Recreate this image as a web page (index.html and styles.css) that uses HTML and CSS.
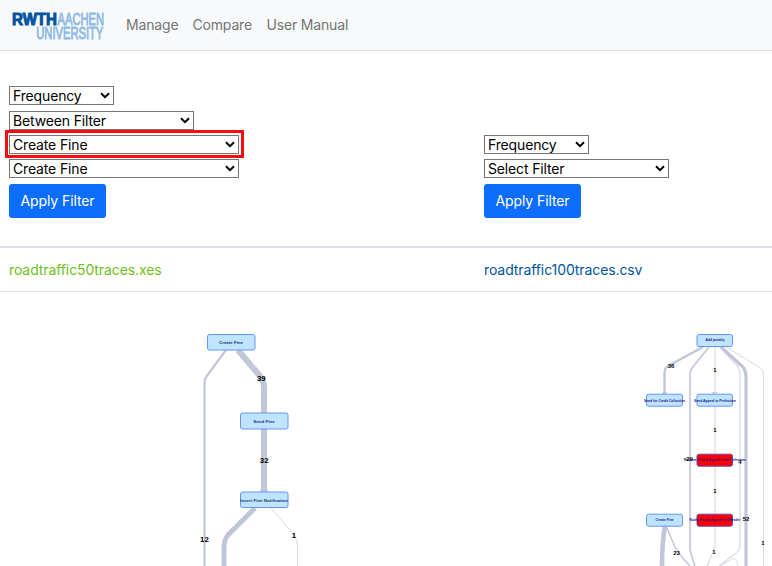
FILE: index.html
```
<!DOCTYPE html>
<html lang="en">
<head>
<meta charset="utf-8">
<title>Compare</title>
<link rel="stylesheet" href="styles.css">
</head>
<body>
<nav class="navbar">
  <svg class="logo" width="92" height="34" viewBox="0 -3 92 34" aria-label="RWTH Aachen University">
    <text class="logo-dark" x="0" y="12.6" textLength="45" lengthAdjust="spacingAndGlyphs">RWTH</text>
    <text class="logo-light" x="45.5" y="12.7" textLength="46.5" lengthAdjust="spacingAndGlyphs">AACHEN</text>
    <text class="logo-light" x="24.3" y="26.8" textLength="67" lengthAdjust="spacingAndGlyphs">UNIVERSITY</text>
  </svg>
  <a class="nav-link manage">Manage</a>
  <a class="nav-link compare">Compare</a>
  <a class="nav-link manual">User Manual</a>
</nav>
<main class="comparison">
  <section class="filters">
    <form class="filter-form">
      <div class="picker small first"><select><option>Frequency</option></select><svg class="chevron" viewBox="0 0 10 7"><path d="M1 1.3 5 5.2 9 1.3"/></svg></div>
      <div class="picker medium"><select><option>Between Filter</option></select><svg class="chevron" viewBox="0 0 10 7"><path d="M1 1.3 5 5.2 9 1.3"/></svg></div>
      <div class="picker large marked"><select><option>Create Fine</option></select><svg class="chevron" viewBox="0 0 10 7"><path d="M1 1.3 5 5.2 9 1.3"/></svg></div>
      <div class="picker large"><select><option>Create Fine</option></select><svg class="chevron" viewBox="0 0 10 7"><path d="M1 1.3 5 5.2 9 1.3"/></svg></div>
      <button class="apply" type="button">Apply Filter</button>
    </form>
    <form class="filter-form">
      <div class="picker small"><select><option>Frequency</option></select><svg class="chevron" viewBox="0 0 10 7"><path d="M1 1.3 5 5.2 9 1.3"/></svg></div>
      <div class="picker medium"><select><option>Select Filter</option></select><svg class="chevron" viewBox="0 0 10 7"><path d="M1 1.3 5 5.2 9 1.3"/></svg></div>
      <button class="apply" type="button">Apply Filter</button>
    </form>
  </section>
  <section class="files">
    <span class="file green"><span>roadtraffic50traces.xes</span></span>
    <span class="file blue"><span>roadtraffic100traces.csv</span></span>
  </section>
  <svg class="graphs" width="772" height="274" viewBox="0 292 772 274">
    <g class="edges">
      <path stroke-width="2.2" d="M226 350 206 377Q204.500 380 204.500 384V566"/>
      <path stroke-width="6" d="M238 350 260 376Q264 381 264 388V492"/>
      <path stroke-width="5" d="M255 508 228 535Q224 540 224 547V566"/>
      <path class="thin" stroke-width="1" d="M271 508 294 535Q297.500 540 297.500 546V566"/>
    </g>
    <g class="arrowheads">
      <path d="M261 413v-3h6v3zM260.500 492v-3h7v3zM662.500 394v-2h4v2zM712.500 394v-2h5l-2.500 2z"/>
    </g>
    <g class="nodes">
      <rect x="207.500" y="334.500" width="47.500" height="15.500" rx="2"/>
      <rect x="240.500" y="413" width="47.500" height="16" rx="2"/>
      <rect x="240.500" y="492" width="47.500" height="15.500" rx="2"/>
    </g>
    <g class="node-text left">
      <text x="231" y="344" textLength="24" lengthAdjust="spacingAndGlyphs">Create Fine</text>
      <text x="264" y="422.500" textLength="21.500" lengthAdjust="spacingAndGlyphs">Send Fine</text>
      <text x="264.200" y="501.700" textLength="48" lengthAdjust="spacingAndGlyphs">Insert Fine Notification</text>
    </g>
    <g class="count left">
      <text x="261.300" y="381">39</text><text x="264.200" y="462.700">32</text>
      <text x="204.400" y="542">12</text><text x="294" y="538">1</text>
    </g>

    <g class="edges">
      <path stroke-width="2.400" d="M703 347 668 366Q664.500 368 664.500 373V393"/>
      <path stroke-width="1.600" d="M709 347 692 368Q690 371 690 375V548Q690 552 695 566"/>
      <path class="thin" stroke-width="1.200" d="M715 347V393M715 407V453M715 467V513M715 527V547L707 566"/>
      <path class="thin" stroke-width="1.300" d="M720 347 738 367Q740 370 740 374V546Q740 550 736 553L719 566"/>
      <path stroke-width="3.200" d="M721 347 743 367Q746 371 746 377V566"/>
      <path class="thin" stroke-width="1" d="M726 347 759 367Q763.500 370 763.500 374V566"/>
      <path stroke-width="4.600" d="M665 526Q662 542 662 566"/>
      <path stroke-width="1.400" d="M666 526 675 547Q677 552 690 566"/>
      <path class="thin" stroke-width="1" d="M720 566 730 560Q737 555 738 566"/>
      <path class="thin" stroke-width=".7" d="m713 451 2 2 2-2m-4 60 2 2 2-2"/>
    </g>
    <g class="nodes">
      <rect x="697" y="334.500" width="35.500" height="12" rx="2"/>
      <rect x="646.500" y="394.200" width="36" height="12" rx="2"/>
      <rect x="697" y="394.200" width="35.500" height="12" rx="2"/>
      <rect x="646.500" y="514.200" width="36" height="12" rx="2"/>
      <rect class="alert" x="697" y="454.200" width="35.500" height="12" rx="2"/>
      <rect class="alert" x="697" y="514.200" width="35.500" height="12" rx="2"/>
    </g>
    <g class="node-text right">
      <text x="715" y="341.300" textLength="19" lengthAdjust="spacingAndGlyphs">Add penalty</text>
      <text x="664.500" y="401.500" textLength="41" lengthAdjust="spacingAndGlyphs">Send for Credit Collection</text>
      <text x="715" y="401.500" textLength="42" lengthAdjust="spacingAndGlyphs">Send Appeal to Prefecture</text>
      <text x="715" y="461.200" textLength="62" lengthAdjust="spacingAndGlyphs">Receive Result Appeal from Prefecture</text>
      <text x="664.500" y="521.300" textLength="18" lengthAdjust="spacingAndGlyphs">Create Fine</text>
      <text x="715" y="521.300" textLength="51" lengthAdjust="spacingAndGlyphs">Notify Result Appeal to Offender</text>
    </g>
    <g class="count right">
      <text x="671" y="368">36</text><text x="715" y="372">1</text>
      <text x="715" y="432">1</text><text x="689.500" y="461">29</text>
      <text x="740" y="463.500">4</text><text x="715" y="492.500">1</text>
      <text x="746" y="520.500">52</text><text x="676.500" y="554.500">23</text>
      <text x="714" y="554">1</text><text x="763" y="545">1</text>
    </g>
  </svg>
</main>
</body>
</html>
```
FILE: styles.css
```
* { box-sizing: border-box; }
body {
  margin: 0;
  height: 566px;
  overflow: hidden;
  background: #fff;
  font: 14px/20px Inter, "Liberation Sans", sans-serif;
  letter-spacing: -.1px;
}
.navbar {
  display: flex;
  align-items: center;
  height: 51px;
  padding-left: 12px;
  background: #f8f9fa;
  border-bottom: 1px solid #d6dfe5;
}
.logo { margin-right: 22px; margin-top: 2px; overflow: visible; letter-spacing: 0; }
.logo text { font-family: "Liberation Sans Narrow", "Liberation Sans", sans-serif; }
.logo .logo-dark { font-size: 16px; font-weight: 700; fill: #00549f; stroke: #00549f; stroke-width: 1; }
.logo .logo-light { font-size: 16.300px; fill: #8ebae5; stroke: #8ebae5; stroke-width: .9; }
.nav-link { color: #747576; white-space: nowrap; letter-spacing: -.17px; }
.manage { width: 66.500px; }
.compare { width: 74px; }
.filters {
  display: grid;
  grid-template-columns: 475px 1fr;
  align-items: end;
  height: 197px;
  padding: 0 9px 28px;
  border-bottom: 2px solid #dee2e6;
}
.filter-form { display: flex; flex-direction: column; align-items: flex-start; gap: 5px; margin: 0; }
.picker { position: relative; height: 19px; }
.first { margin-bottom: 1px; }
.small { width: 105px; }
.medium { width: 185px; }
.large { width: 230px; }
.picker select {
  display: block;
  width: 100%;
  height: 19px;
  padding: 0 3px;
  appearance: none;
  color: #000;
  background: #fff;
  border: 1px solid #767676;
  border-radius: 0;
  font: 14px/17px Inter, "Liberation Sans", sans-serif;
  letter-spacing: -.15px;
}
.chevron { position: absolute; top: 6px; right: 4px; width: 10px; height: 7px; fill: none; stroke: #000; stroke-width: 2; }
.marked::after {
  content: "";
  position: absolute;
  inset: -5.500px -5px -4px -4px;
  border: 3px solid #f90d0b;
}
.apply {
  width: 97px;
  height: 34px;
  margin-top: 1px;
  padding: 0;
  border: 0;
  border-radius: 3px;
  color: #fff;
  background: #0d6efd;
  font: 14px/20px Inter, "Liberation Sans", sans-serif;
  letter-spacing: -.1px;
}
.files {
  display: grid;
  grid-template-columns: 475px 1fr;
  align-items: center;
  height: 44px;
  padding: 0 9px;
  border-bottom: 1px solid #dee2e6;
}
.green { color: #6fc021; }
.blue { color: #00549f; }
.graphs { display: block; letter-spacing: 0; }
.edges { fill: none; stroke: #c1c6d8; }
.edges .thin { stroke: #d9dbe6; }
.arrowheads { fill: #c1c6d8; }
.nodes { fill: #bfe4ff; stroke: #6495fb; stroke-width: 1; }
.nodes .alert { fill: #f00; stroke: #6047bf; }
.node-text { text-anchor: middle; fill: #173476; font-family: "Liberation Sans", sans-serif; font-weight: 700; }
.node-text.left { font-size: 4.400px; }
.node-text.right { font-size: 3.500px; fill: #14148a; }
.count { text-anchor: middle; fill: #000; font-family: "Liberation Sans", sans-serif; font-weight: 700; }
.count.left { font-size: 7.800px; }
.count.right { font-size: 6px; }
```
